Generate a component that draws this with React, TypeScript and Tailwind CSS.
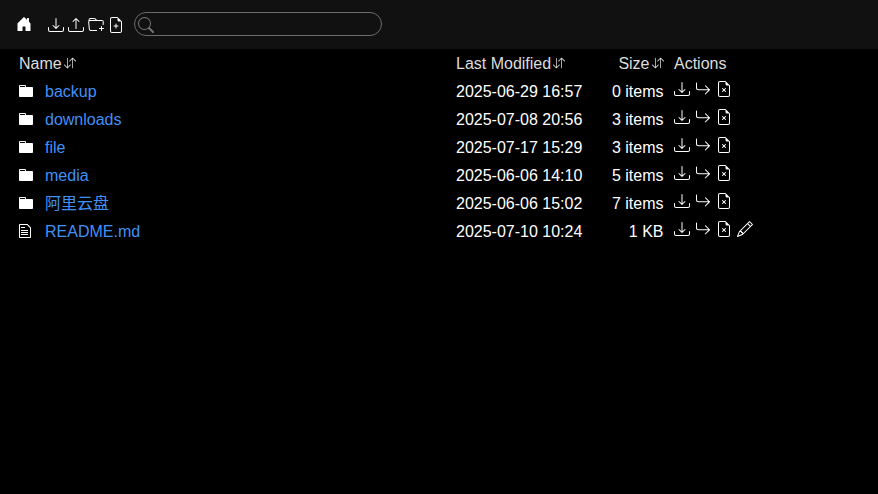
import type { ReactNode } from "react";
import {
  BsArrowDownUp,
  BsDownload,
  BsFileEarmarkPlus,
  BsFileEarmarkX,
  BsFolderPlus,
  BsHouseDoorFill,
  BsPencil,
  BsUpload,
} from "react-icons/bs";

type Entry = { name: string; modified: string; size: string; file?: boolean };

const entries: Entry[] = [
  { name: "backup", modified: "2025-06-29 16:57", size: "0 items" },
  { name: "downloads", modified: "2025-07-08 20:56", size: "3 items" },
  { name: "file", modified: "2025-07-17 15:29", size: "3 items" },
  { name: "media", modified: "2025-06-06 14:10", size: "5 items" },
  { name: "阿里云盘", modified: "2025-06-06 15:02", size: "7 items" },
  { name: "README.md", modified: "2025-07-10 10:24", size: "1 KB", file: true },
];

function FolderIcon() {
  return (
    <svg width="14" height="16" viewBox="0 0 14 16" fill="currentColor">
      <path d="M13 4H7V3c0-.66-.31-1-1-1H1c-.55 0-1 .45-1 1v10c0 .55.45 1 1 1h12c.55 0 1-.45 1-1V5c0-.55-.45-1-1-1zM6 4H1V3h5v1z" />
    </svg>
  );
}

function FileIcon() {
  return (
    <svg width="12" height="16" viewBox="0 0 12 16" fill="currentColor">
      <path d="M6 5H2V4h4v1zM2 8h7V7H2v1zm0 2h7V9H2v1zm0 2h7v-1H2v1zm10-7.5V14c0 .55-.45 1-1 1H1c-.55 0-1-.45-1-1V2c0-.55.45-1 1-1h7.5L12 4.5zM11 5L8 2H1v12h10V5z" />
    </svg>
  );
}

function MoveIcon() {
  return (
    <svg width="16" height="16" viewBox="0 0 16 16" fill="currentColor">
      <path
        fillRule="evenodd"
        d="M1.5 1.5A.5.5 0 0 0 1 2v4.8a2.5 2.5 0 0 0 2.5 2.5h9.793l-3.347 3.346a.5.5 0 0 0 .708.708l4.2-4.2a.5.5 0 0 0 0-.708l-4-4a.5.5 0 0 0-.708.708L13.293 8.3H3.5A1.5 1.5 0 0 1 2 6.8V2a.5.5 0 0 0-.5-.5z"
      />
    </svg>
  );
}

function SearchIcon() {
  return (
    <svg width="16" height="16" viewBox="0 0 16 16" fill="currentColor" fillRule="evenodd">
      <path d="M10.442 10.442a1 1 0 0 1 1.415 0l3.85 3.85a1 1 0 0 1-1.414 1.415l-3.85-3.85a1 1 0 0 1 0-1.415z" />
      <path d="M6.5 12a5.5 5.5 0 1 0 0-11 5.5 5.5 0 0 0 0 11zM13 6.5a6.5 6.5 0 1 1-13 0 6.5 6.5 0 0 1 13 0z" />
    </svg>
  );
}

function Heading({ children }: { children: ReactNode }) {
  return (
    <span className="flex items-center gap-0.5">
      {children}
      <BsArrowDownUp size={12} className="mb-0.5" />
    </span>
  );
}

const columns = "grid grid-cols-[437px_126px_81.5px_1fr] h-7 items-center whitespace-nowrap pl-[19px]";

export default function App() {
  return (
    <div className="h-screen overflow-hidden bg-black font-['Liberation_Sans','Noto_Sans_CJK_SC',sans-serif] text-base leading-7 text-white">
      <header className="flex h-[49px] items-center bg-[#111] pl-4">
        <BsHouseDoorFill size={16} className="mb-px" />
        <div className="ml-4 flex items-center gap-1">
          <BsDownload size={16} />
          <BsUpload size={16} />
          <BsFolderPlus size={16} />
          <BsFileEarmarkPlus size={16} />
        </div>
        <div className="mb-px ml-2.5 flex h-6 w-[248px] items-center rounded-full border border-[#6b6b6b] pl-[3px] pt-0.5 text-[#777]">
          <SearchIcon />
        </div>
      </header>
      <main className="pt-px">
        <div className={`${columns} text-[#ddd]`}>
          <Heading>Name</Heading>
          <Heading>Last Modified</Heading>
          <span className="flex justify-end"><Heading>Size</Heading></span>
          <span className="pl-[10.5px]">Actions</span>
        </div>
        {entries.map((entry) => (
          <div key={entry.name} className={columns}>
            <div className="flex items-center">
              <span className="flex w-[26px] pb-0.5">{entry.file ? <FileIcon /> : <FolderIcon />}</span>
              <a className="text-[#4190f7]">{entry.name}</a>
            </div>
            <span>{entry.modified}</span>
            <span className="text-right">{entry.size}</span>
            <span className="flex gap-[5px] pb-1.5 pl-[10.5px]">
              <BsDownload size={16} />
              <MoveIcon />
              <BsFileEarmarkX size={16} />
              {entry.file && <BsPencil size={16} />}
            </span>
          </div>
        ))}
      </main>
    </div>
  );
}
